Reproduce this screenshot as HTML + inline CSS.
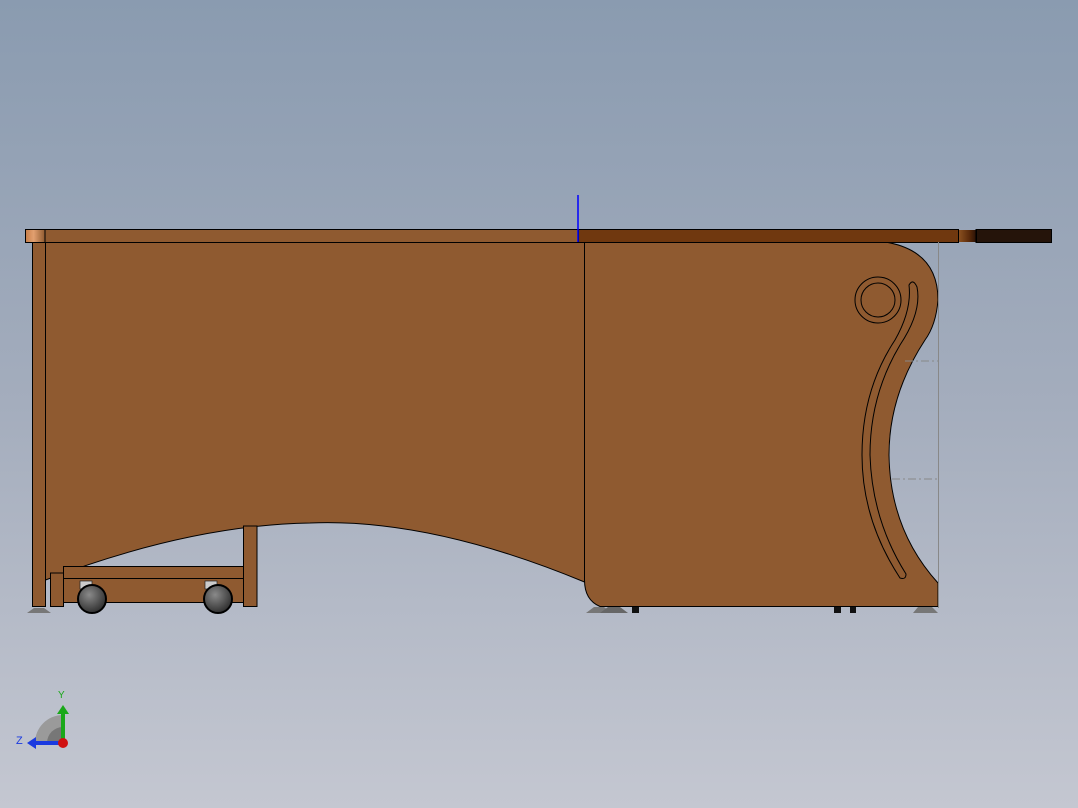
<!DOCTYPE html>
<html><head><style>
html,body{margin:0;padding:0;width:1078px;height:808px;overflow:hidden}
body{background:linear-gradient(#8a9bb0 0%,#a4adbd 50%,#c4c7d1 100%)}
svg{position:absolute;left:0;top:0}
</style></head><body>
<svg width="1078" height="808" viewBox="0 0 1078 808">
<defs>
<linearGradient id="tl" x1="0" x2="1"><stop offset="0" stop-color="#c87f4a"/><stop offset=".4" stop-color="#e2a070"/><stop offset="1" stop-color="#8f5a30"/></linearGradient>
<linearGradient id="tr" x1="0" x2="1"><stop offset="0" stop-color="#8a5020"/><stop offset=".6" stop-color="#5a2a0a"/><stop offset="1" stop-color="#2a1206"/></linearGradient>
<radialGradient id="wh" cx=".4" cy=".35" r=".7"><stop offset="0" stop-color="#8a8a8a"/><stop offset="1" stop-color="#2a2a2a"/></radialGradient>
</defs>
<!-- top -->
<rect x="25.5" y="229.5" width="553" height="13" fill="#8f5a30" stroke="#000"/>
<rect x="26" y="230" width="19" height="12" fill="url(#tl)"/>
<line x1="45" y1="229" x2="45" y2="242" stroke="#000"/>
<rect x="578.5" y="229.5" width="380" height="13" fill="#70380f" stroke="#000"/>
<rect x="959" y="230" width="17" height="12" fill="url(#tr)"/>
<rect x="976" y="229.5" width="75.5" height="13" fill="#25140a" stroke="#000"/>
<line x1="958.5" y1="229" x2="958.5" y2="242" stroke="#000"/>
<line x1="976.5" y1="229" x2="976.5" y2="242" stroke="#000"/>
<line x1="578" y1="195" x2="578" y2="242" stroke="#0000ff" stroke-width="1.5"/>
<!-- left leg -->
<rect x="32.5" y="242.5" width="13" height="364" fill="#8f5a30" stroke="#000"/>
<path d="M27 613 L51 613 L44 608 L34 608 Z" fill="#777"/>
<!-- main panel -->
<path d="M45.5 242.5 L584.5 242.5 L584.5 582 Q430 518 310 523 Q190 525 45.5 580 Z" fill="#8f5a30" stroke="#000"/>
<!-- drawer unit -->
<rect x="50.5" y="573" width="13" height="33.5" fill="#8f5a30" stroke="#000"/>
<rect x="63.5" y="566.5" width="180" height="12" fill="#8f5a30" stroke="#000"/>
<rect x="63.5" y="578.5" width="180" height="24" fill="#8f5a30" stroke="#000"/>
<rect x="243.5" y="526" width="13.5" height="80.5" fill="#8f5a30" stroke="#000"/>
<rect x="80" y="581" width="12" height="8" fill="#ccc" stroke="#222" stroke-width=".7"/>
<rect x="205" y="581" width="12" height="8" fill="#ccc" stroke="#222" stroke-width=".7"/>
<circle cx="92" cy="599" r="14" fill="url(#wh)" stroke="#000" stroke-width="2"/>
<circle cx="218" cy="599" r="14" fill="url(#wh)" stroke="#000" stroke-width="2"/>
<!-- right pedestal -->
<path d="M584.5 242.5 L888 242.5 Q938 252 938 300 Q936 325 925 340 Q889 395 889 455 Q890 530 938 583 L938 606.5 L600 606.5 Q584.5 600 584.5 580 Z" fill="#8f5a30" stroke="#000"/>
<line x1="938.5" y1="242" x2="938.5" y2="608" stroke="#888"/>
<line x1="905" y1="361" x2="938" y2="361" stroke="#888" stroke-dasharray="8 3 2 3"/>
<line x1="892" y1="479" x2="938" y2="479" stroke="#888" stroke-dasharray="8 3 2 3"/>
<circle cx="878" cy="300" r="23" fill="none" stroke="#000"/>
<circle cx="878" cy="300" r="17" fill="none" stroke="#000"/>
<path d="M909 285 Q913 278 917 287 Q922 312 900 345 Q870 395 870 455 Q872 520 906 574 Q906 580 900 578 Q862 520 862 455 Q862 390 895 340 Q912 310 909 285 Z" fill="none" stroke="#000"/>
<!-- feet -->
<path d="M586 613 L612 613 L604 607 L594 607 Z" fill="#777"/>
<path d="M600 613 L628 613 L620 607 L608 607 Z" fill="#666"/>
<rect x="632" y="607" width="7" height="6" fill="#111"/>
<rect x="834" y="607" width="7" height="6" fill="#111"/>
<rect x="850" y="607" width="6" height="6" fill="#111"/>
<path d="M913 613 L938 613 L932 607 L918 607 Z" fill="#777"/>
<!-- triad -->
<path d="M35 743 A28 28 0 0 1 63 715 L63 743 Z" fill="#9a9a9a"/>
<path d="M47 743 A16 16 0 0 1 63 727 L63 743 Z" fill="#777"/>
<rect x="61" y="712" width="4" height="30" fill="#1aa81a"/>
<path d="M57 714 L63 705 L69 714 Z" fill="#1aa81a"/>
<rect x="34" y="741" width="28" height="4" fill="#1a3ae0"/>
<path d="M36 737 L27 743 L36 749 Z" fill="#1a3ae0"/>
<circle cx="63" cy="743" r="5" fill="#d01010"/>
<text x="58" y="698" font-family="Liberation Sans,sans-serif" font-size="10" fill="#1aa81a">Y</text>
<text x="16" y="744" font-family="Liberation Sans,sans-serif" font-size="11" fill="#1a3ae0">Z</text>
</svg>
</body></html>
